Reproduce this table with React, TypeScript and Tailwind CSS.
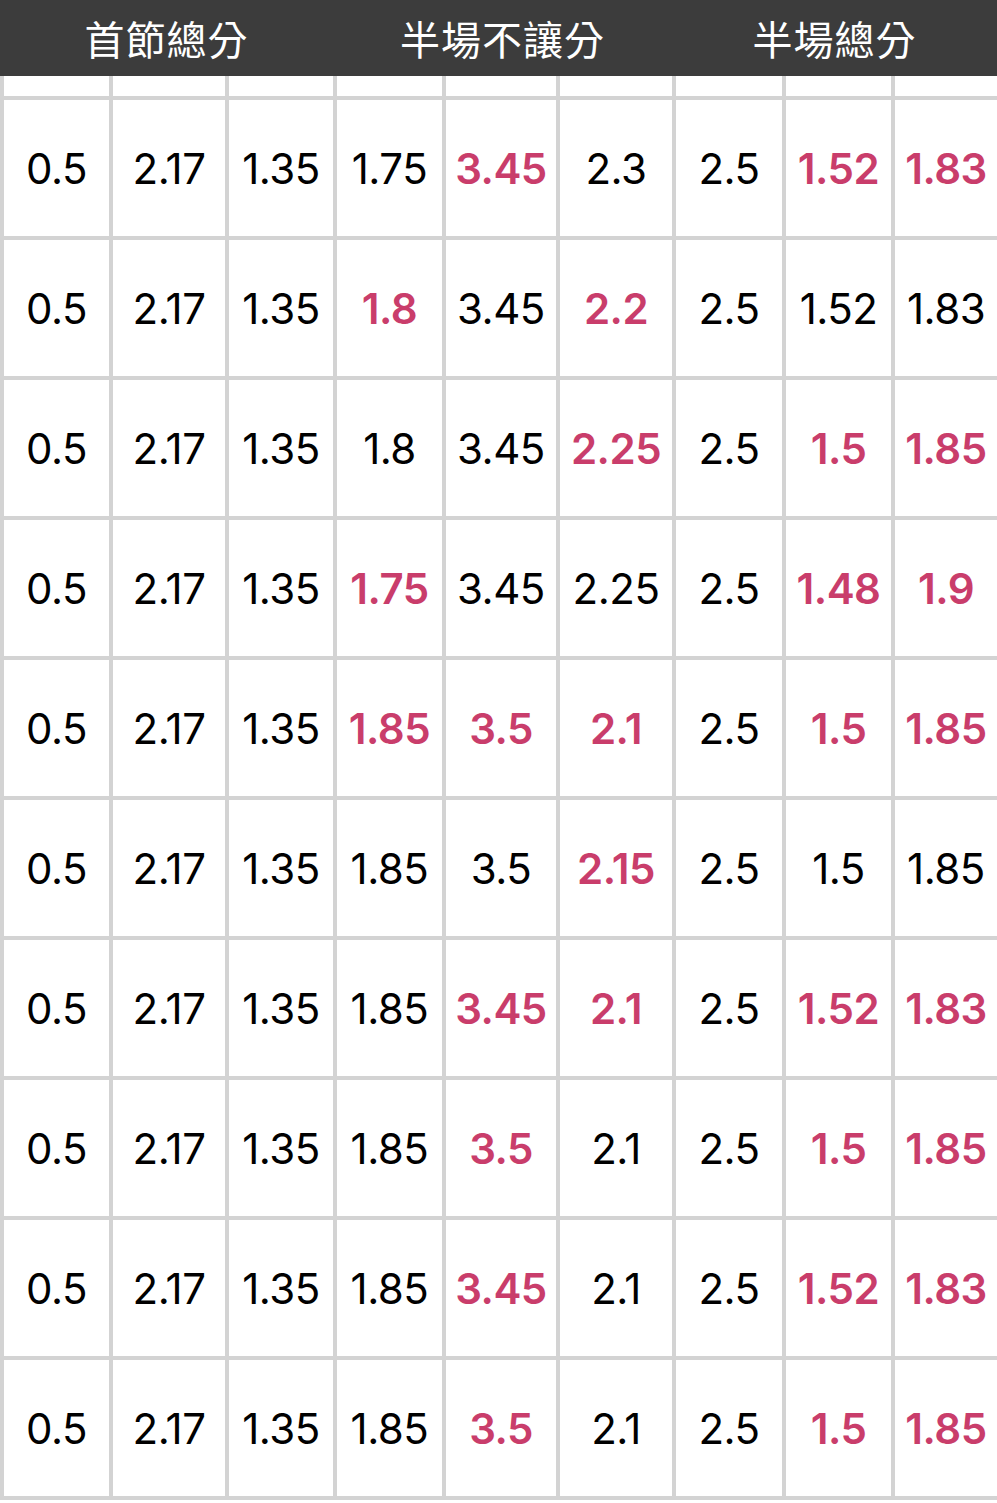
type Cell = { v: string; hot?: boolean };

const h = (v: string): Cell => ({ v, hot: true });
const n = (v: string): Cell => ({ v });

const rows: Cell[][] = [
  [n('0.5'), n('2.17'), n('1.35'), n('1.75'), h('3.45'), n('2.3'), n('2.5'), h('1.52'), h('1.83')],
  [n('0.5'), n('2.17'), n('1.35'), h('1.8'), n('3.45'), h('2.2'), n('2.5'), n('1.52'), n('1.83')],
  [n('0.5'), n('2.17'), n('1.35'), n('1.8'), n('3.45'), h('2.25'), n('2.5'), h('1.5'), h('1.85')],
  [n('0.5'), n('2.17'), n('1.35'), h('1.75'), n('3.45'), n('2.25'), n('2.5'), h('1.48'), h('1.9')],
  [n('0.5'), n('2.17'), n('1.35'), h('1.85'), h('3.5'), h('2.1'), n('2.5'), h('1.5'), h('1.85')],
  [n('0.5'), n('2.17'), n('1.35'), n('1.85'), n('3.5'), h('2.15'), n('2.5'), n('1.5'), n('1.85')],
  [n('0.5'), n('2.17'), n('1.35'), n('1.85'), h('3.45'), h('2.1'), n('2.5'), h('1.52'), h('1.83')],
  [n('0.5'), n('2.17'), n('1.35'), n('1.85'), h('3.5'), n('2.1'), n('2.5'), h('1.5'), h('1.85')],
  [n('0.5'), n('2.17'), n('1.35'), n('1.85'), h('3.45'), n('2.1'), n('2.5'), h('1.52'), h('1.83')],
  [n('0.5'), n('2.17'), n('1.35'), n('1.85'), h('3.5'), n('2.1'), n('2.5'), h('1.5'), h('1.85')],
];

const groups = ['首節總分', '半場不讓分', '半場總分'];

const cols = 'grid grid-cols-[109px_116px_108px_109px_114px_116px_110px_109px_106px]';

export default function App() {
  return (
    <div className="w-[997px] h-[1503px] bg-white overflow-hidden font-['Inter','Noto_Sans_CJK_TC',sans-serif]">
      {/* group titles */}
      <div className="grid grid-cols-[333px_339px_325px] h-[76px] bg-[#3c3c3c] text-white">
        {groups.map((g) => (
          <div
            key={g}
            className="flex items-center justify-center text-[40px] leading-none font-['Noto_Sans_CJK_TC',sans-serif] font-normal tracking-[1px]"
          >
            {g}
          </div>
        ))}
      </div>

      {/* scrolled-off sub header row */}
      <div className={cols}>
        {rows[0].map((_, i) => (
          <div
            key={i}
            className={`h-[24px] border-b-4 border-[#d3d3d3] ${i === 8 ? 'border-l-4' : 'border-l-4'}`}
          />
        ))}
      </div>

      {rows.map((r, ri) => (
        <div key={ri} className={cols}>
          {r.map((c, ci) => (
            <div
              key={ci}
              className={`h-[140px] border-l-4 border-b-4 border-[#d3d3d3] flex items-center justify-center text-[42px] tracking-[-0.5px] ${
                c.hot ? 'text-[#c93d6b] font-semibold' : 'text-black font-normal'
              }`}
            >
              {c.v}
            </div>
          ))}
        </div>
      ))}
    </div>
  );
}
